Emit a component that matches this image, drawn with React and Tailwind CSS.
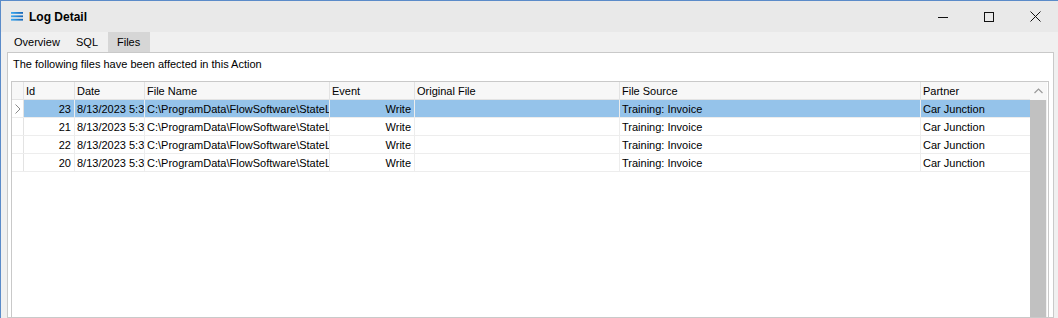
import React from 'react';

const rows = [
  { id: 23, selected: true },
  { id: 21 },
  { id: 22 },
  { id: 20 },
];

const cols = [
  { key: 'id', label: 'Id', w: 'w-[51px]' },
  { key: 'date', label: 'Date', w: 'w-[70px]' },
  { key: 'file', label: 'File Name', w: 'w-[185px]' },
  { key: 'event', label: 'Event', w: 'w-[85px]' },
  { key: 'orig', label: 'Original File', w: 'w-[205px]' },
  { key: 'source', label: 'File Source', w: 'w-[301px]' },
  { key: 'partner', label: 'Partner', w: 'w-[109px]' },
];

const cellText = {
  date: '8/13/2023 5:33 PM',
  file: 'C:\\ProgramData\\FlowSoftware\\StateLog\\Invoice.pdf',
  event: 'Write',
  orig: '',
  source: 'Training: Invoice',
  partner: 'Car Junction',
};

const MenuIcon = () => (
  <svg width="12" height="9" viewBox="0 0 12 9" className="mr-[6px]">
    <defs>
      <linearGradient id="g" x1="0" x2="1" y1="0" y2="0">
        <stop offset="0" stopColor="#39a8f0" />
        <stop offset="1" stopColor="#1565b8" />
      </linearGradient>
    </defs>
    <rect x="0" y="0" width="12" height="1.8" fill="url(#g)" />
    <rect x="0" y="3.4" width="12" height="1.8" fill="url(#g)" />
    <rect x="0" y="6.8" width="12" height="1.8" fill="url(#g)" />
  </svg>
);

const WindowControls = () => (
  <div className="flex items-center h-full">
    <div className="w-[46px] h-full flex items-center justify-center">
      <svg width="10" height="10" viewBox="0 0 10 10">
        <path d="M0 5.5h10" stroke="#111" strokeWidth="1" />
      </svg>
    </div>
    <div className="w-[46px] h-full flex items-center justify-center">
      <svg width="10" height="10" viewBox="0 0 10 10">
        <rect x="0.5" y="0.5" width="9" height="9" fill="none" stroke="#111" strokeWidth="1" />
      </svg>
    </div>
    <div className="w-[46px] h-full flex items-center justify-center">
      <svg width="11" height="11" viewBox="0 0 11 11">
        <path d="M0.5 0.5l10 10M10.5 0.5l-10 10" stroke="#111" strokeWidth="1" />
      </svg>
    </div>
  </div>
);

const Chevron = () => (
  <svg width="6" height="10" viewBox="0 0 6 10">
    <path d="M0.5 0.5l4.5 4.5-4.5 4.5" fill="none" stroke="#8a8a8a" strokeWidth="1" />
  </svg>
);

export default function App() {
  return (
    <div
      className="w-[1058px] h-[318px] overflow-hidden bg-[#f0f0f0] border-l border-t border-[#5b8bc9] flex flex-col text-[11px] text-black"
      style={{ fontFamily: '"Liberation Sans", Arial, sans-serif' }}
    >
      {/* title bar */}
      <div className="h-[31px] shrink-0 bg-[#e9e9e9] flex items-center justify-between pl-[10px]">
        <div className="flex items-center">
          <MenuIcon />
          <span className="text-[12px] font-bold">Log Detail</span>
        </div>
        <WindowControls />
      </div>

      {/* tabs */}
      <div className="h-[20px] shrink-0 flex items-stretch pl-[6px]">
        <div className="w-[61px] pl-[7px] pt-[1px] flex items-center">Overview</div>
        <div className="w-[40px] pl-[8px] pt-[1px] flex items-center">SQL</div>
        <div className="w-[42px] pl-[9px] pt-[1px] flex items-center bg-[#d6d6d6]">Files</div>
      </div>

      {/* panel */}
      <div className="flex-1 ml-[6px] mr-[4px] bg-white border border-[#c9c9c9] flex flex-col min-h-0">
        <div className="h-[28px] shrink-0 pl-[5px] pt-[3px]">
          The following files have been affected in this Action
        </div>
        <div className="flex-1 ml-[3px] mr-[4px] border border-b-0 border-[#c9c9c9] flex min-h-0">
          <div className="w-[1018px] shrink-0 flex flex-col">
            {/* header */}
            <div className="h-[18px] flex bg-[#f7f7f7] border-b border-[#e3e3e3]">
              <div className="w-[12px] shrink-0 border-r border-[#e3e3e3]" />
              {cols.map((c, i) => (
                <div
                  key={c.key}
                  className={`${c.w} shrink-0 pl-[2px] pt-[1px] flex items-center overflow-hidden whitespace-nowrap ${
                    i < cols.length - 1 ? 'border-r border-[#e3e3e3]' : ''
                  }`}
                >
                  {c.label}
                </div>
              ))}
            </div>
            {rows.map((r) => (
              <div key={r.id} className="h-[18px] flex border-b border-[#ededed]">
                <div className="w-[12px] shrink-0 border-r border-[#e3e3e3] flex items-center justify-center">
                  {r.selected && <Chevron />}
                </div>
                {cols.map((c, i) => (
                  <div
                    key={c.key}
                    className={`${c.w} shrink-0 pt-[1px] flex items-center overflow-hidden whitespace-nowrap ${
                      c.key === 'id' || c.key === 'event' ? 'justify-end pr-[3px]' : 'pl-[2px]'
                    } ${i < cols.length - 1 ? 'border-r border-[#ededed]' : ''} ${
                      r.selected ? 'bg-[#95c3ea]' : ''
                    }`}
                  >
                    {c.key === 'id' ? r.id : cellText[c.key]}
                  </div>
                ))}
              </div>
            ))}
          </div>
          {/* scrollbar */}
          <div className="w-[17px] shrink-0 flex flex-col bg-[#f0f0f0]">
            <div className="h-[18px] flex items-center justify-center bg-[#f7f7f7]">
              <svg width="9" height="6" viewBox="0 0 9 6">
                <path d="M0.5 5l4-4 4 4" fill="none" stroke="#9a9a9a" strokeWidth="1.2" />
              </svg>
            </div>
            <div className="flex-1 w-[16px] bg-[#c1c1c1]" />
          </div>
        </div>
      </div>
    </div>
  );
}
